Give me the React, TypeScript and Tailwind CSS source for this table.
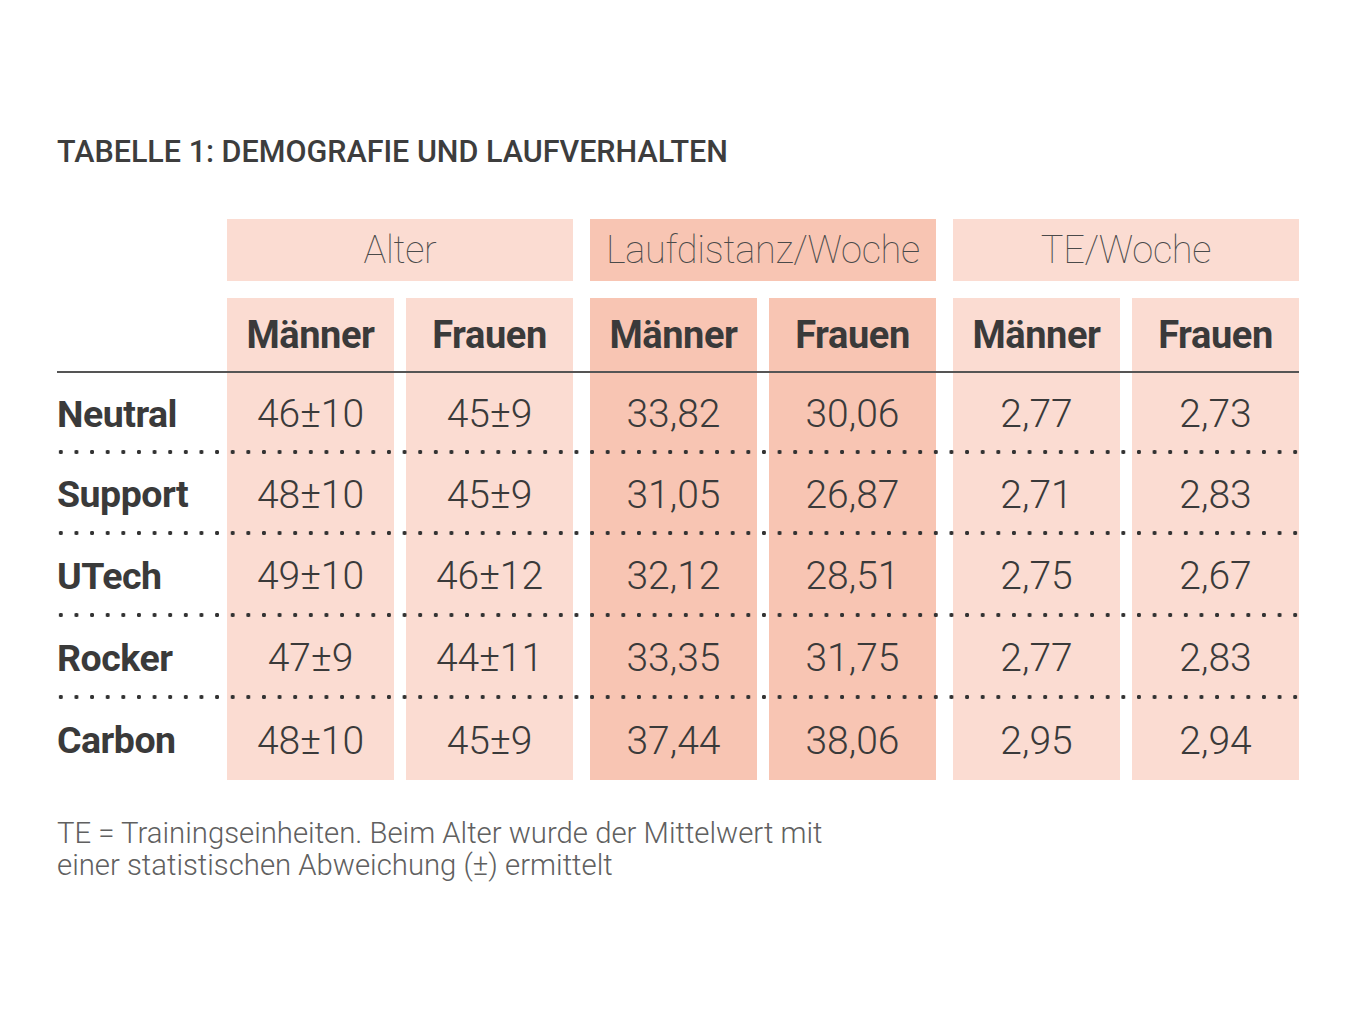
import React from "react";

const LIGHT = "bg-[#fbdcd2]";
const DARK = "bg-[#f8c5b3]";

const groups = [
  { title: "Alter", bg: LIGHT },
  { title: "Laufdistanz/Woche", bg: DARK },
  { title: "TE/Woche", bg: LIGHT },
];

const rows: { label: string; values: string[]; h: string }[] = [
  { label: "Neutral", values: ["46±10", "45±9", "33,82", "30,06", "2,77", "2,73"], h: "h-[80px]" },
  { label: "Support", values: ["48±10", "45±9", "31,05", "26,87", "2,71", "2,83"], h: "h-[81px]" },
  { label: "UTech", values: ["49±10", "46±12", "32,12", "28,51", "2,75", "2,67"], h: "h-[82px]" },
  { label: "Rocker", values: ["47±9", "44±11", "33,35", "31,75", "2,77", "2,83"], h: "h-[82px]" },
  { label: "Carbon", values: ["48±10", "45±9", "37,44", "38,06", "2,95", "2,94"], h: "h-[83px]" },
];

function Row({
  h,
  label,
  cells,
  cellClass,
}: {
  h: string;
  label?: string;
  cells: string[];
  cellClass: string;
}) {
  return (
    <div className={`flex ${h}`}>
      <div className="w-[170px] flex items-center pt-[6px] text-[37.5px] font-bold tracking-[-0.5px] leading-none">
        {label}
      </div>
      <div className="flex gap-[17px]">
        {groups.map((g, gi) => (
          <div key={gi} className="flex gap-[12px]">
            {[0, 1].map((ci) => (
              <div
                key={ci}
                className={`w-[167px] flex items-center justify-center ${g.bg} ${cellClass}`}
              >
                {cells[gi * 2 + ci]}
              </div>
            ))}
          </div>
        ))}
      </div>
    </div>
  );
}

function Dotted() {
  return (
    <div className="relative h-0">
      <div className="h-[6px] -translate-y-1/2 bg-[radial-gradient(circle,#333333_1.9px,transparent_2.4px)] bg-[length:15.63px_6px] bg-[position:-4px_0] bg-repeat-x" />
    </div>
  );
}

function Solid() {
  return (
    <div className="relative h-0">
      <div className="h-[2px] -translate-y-1/2 bg-[#555555]" />
    </div>
  );
}

export default function App() {
  return (
    <div
      className="w-[1360px] h-[1020px] bg-white text-[#3a3a3a] pt-[137px] pl-[57px]"
      style={{ fontFamily: "Roboto, 'Liberation Sans', sans-serif" }}
    >
      <h1 className="text-[30.5px] font-medium leading-none tracking-normal text-[#3d3d3d]">
        TABELLE 1: DEMOGRAFIE UND LAUFVERHALTEN
      </h1>
      <div className="mt-[51px] w-[1242px]">
        <div className="flex h-[62px]">
          <div className="w-[170px]" />
          <div className="flex gap-[17px]">
            {groups.map((g) => (
              <div
                key={g.title}
                className={`w-[346px] flex items-center justify-center ${g.bg} text-[38px] font-thin text-[#4a4a4a] leading-none tracking-[-0.3px]`}
              >
                {g.title}
              </div>
            ))}
          </div>
        </div>
        <div className="h-[17px]" />
        <Row
          h="h-[74px]"
          cells={["Männer", "Frauen", "Männer", "Frauen", "Männer", "Frauen"]}
          cellClass="text-[38px] font-bold tracking-[-0.4px] leading-none"
        />
        <Solid />
        {rows.map((r, i) => (
          <React.Fragment key={r.label}>
            {i > 0 && <Dotted />}
            <Row
              h={r.h}
              label={r.label}
              cells={r.values}
              cellClass="text-[39px] font-light leading-none pt-[6px]"
            />
          </React.Fragment>
        ))}
      </div>
      <p className="mt-[37px] text-[29.3px] leading-[32px] font-light text-[#606060] tracking-normal">
        TE = Trainingseinheiten. Beim Alter wurde der Mittelwert mit
        <br />
        einer statistischen Abweichung (±) ermittelt
      </p>
    </div>
  );
}
